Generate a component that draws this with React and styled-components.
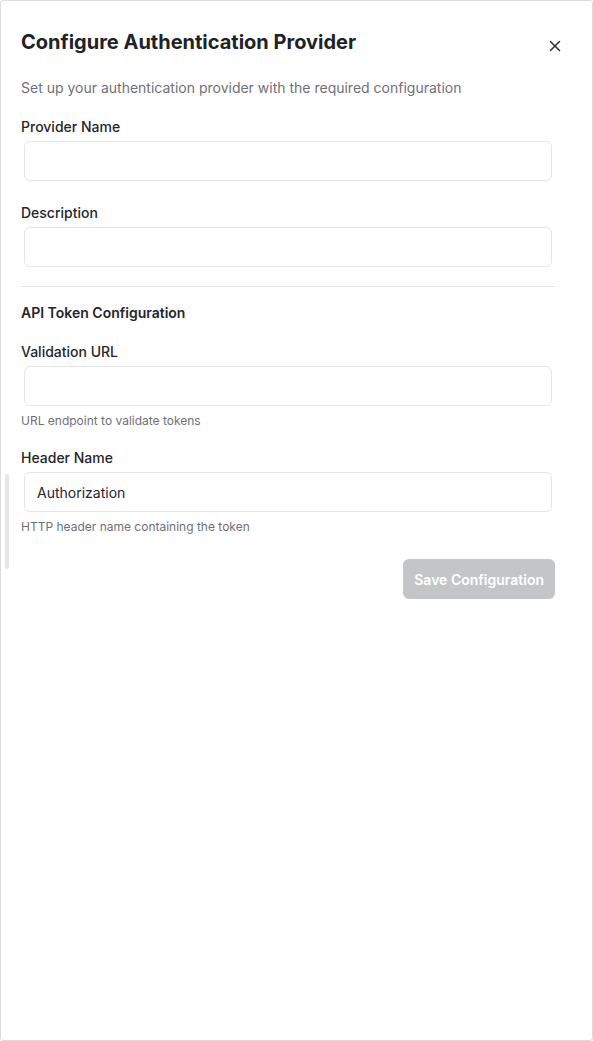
import React from "react";
import styled, { createGlobalStyle } from "styled-components";
import { X } from "lucide-react";

const GlobalStyle = createGlobalStyle`
  html, body {
    margin: 0;
    padding: 0;
    background: #ffffff;
  }
  * {
    box-sizing: border-box;
  }
  body {
    font-family: Inter, "Noto Sans", sans-serif;
    color: #1f2328;
  }
`;

const Frame = styled.div`
  position: relative;
  height: 1041px;
  border: 1px solid #dcdcdc;
  border-radius: 3px;
  background: #fff;
`;

const Panel = styled.div`
  display: flex;
  flex-direction: column;
  padding: 27px 37px 0 20px;
`;

const Header = styled.div`
  display: flex;
  align-items: flex-start;
  justify-content: space-between;
`;

const Title = styled.h2`
  margin: 0;
  font-size: 20px;
  line-height: 28px;
  font-weight: 700;
  color: #202226;
`;

const CloseButton = styled.button`
  display: flex;
  align-items: center;
  justify-content: center;
  width: 18px;
  height: 18px;
  margin-top: 9px;
  margin-right: -9px;
  padding: 0;
  border: none;
  background: none;
  color: #2a2c30;
  cursor: pointer;
`;

const Subtitle = styled.p`
  margin: 22px 0 0;
  font-size: 14px;
  line-height: 20px;
  color: #6e7178;
`;

const Field = styled.div`
  display: flex;
  flex-direction: column;
  margin-top: ${(p) => p.$top || 0}px;
`;

const Label = styled.label`
  font-size: 14px;
  line-height: 20px;
  font-weight: 500;
  color: #24262b;
`;

const Input = styled.input`
  height: 40px;
  margin: 4px 3px 0;
  padding: 0 12px;
  border: 1px solid #e4e5e7;
  border-radius: 6px;
  font-family: inherit;
  font-size: 14px;
  color: #24262b;
  background: #fff;
  outline: none;
`;

const Help = styled.span`
  margin-top: 7px;
  font-size: 12px;
  line-height: 16px;
  color: #6e7178;
`;

const Divider = styled.hr`
  margin: 19px 0 0;
  border: none;
  border-top: 1px solid #e4e5e7;
`;

const SectionTitle = styled.h3`
  margin: 16px 0 0;
  font-size: 14px;
  line-height: 20px;
  font-weight: 600;
  color: #24262b;
`;

const Footer = styled.div`
  display: flex;
  justify-content: flex-end;
  margin-top: 24px;
`;

const SaveButton = styled.button`
  height: 40px;
  padding: 0 11px;
  border: none;
  border-radius: 6px;
  background: #c4c5c7;
  color: #ffffff;
  font-family: inherit;
  font-size: 14px;
  font-weight: 600;
  cursor: not-allowed;
`;

const ResizeHandle = styled.div`
  position: absolute;
  left: 4px;
  top: 473px;
  width: 4px;
  height: 95px;
  border-radius: 2px;
  background: #e6e6e6;
`;

export default function App() {
  return (
    <>
      <GlobalStyle />
      <Frame>
        <ResizeHandle />
        <Panel>
          <Header>
            <Title>Configure Authentication Provider</Title>
            <CloseButton aria-label="Close">
              <X size={18} strokeWidth={2} />
            </CloseButton>
          </Header>
          <Subtitle>
            Set up your authentication provider with the required configuration
          </Subtitle>

          <Field $top={19}>
            <Label>Provider Name</Label>
            <Input />
          </Field>

          <Field $top={22}>
            <Label>Description</Label>
            <Input />
          </Field>

          <Divider />
          <SectionTitle>API Token Configuration</SectionTitle>

          <Field $top={19}>
            <Label>Validation URL</Label>
            <Input />
            <Help>URL endpoint to validate tokens</Help>
          </Field>

          <Field $top={19}>
            <Label>Header Name</Label>
            <Input defaultValue="Authorization" />
            <Help>HTTP header name containing the token</Help>
          </Field>

          <Footer>
            <SaveButton disabled>Save Configuration</SaveButton>
          </Footer>
        </Panel>
      </Frame>
    </>
  );
}
